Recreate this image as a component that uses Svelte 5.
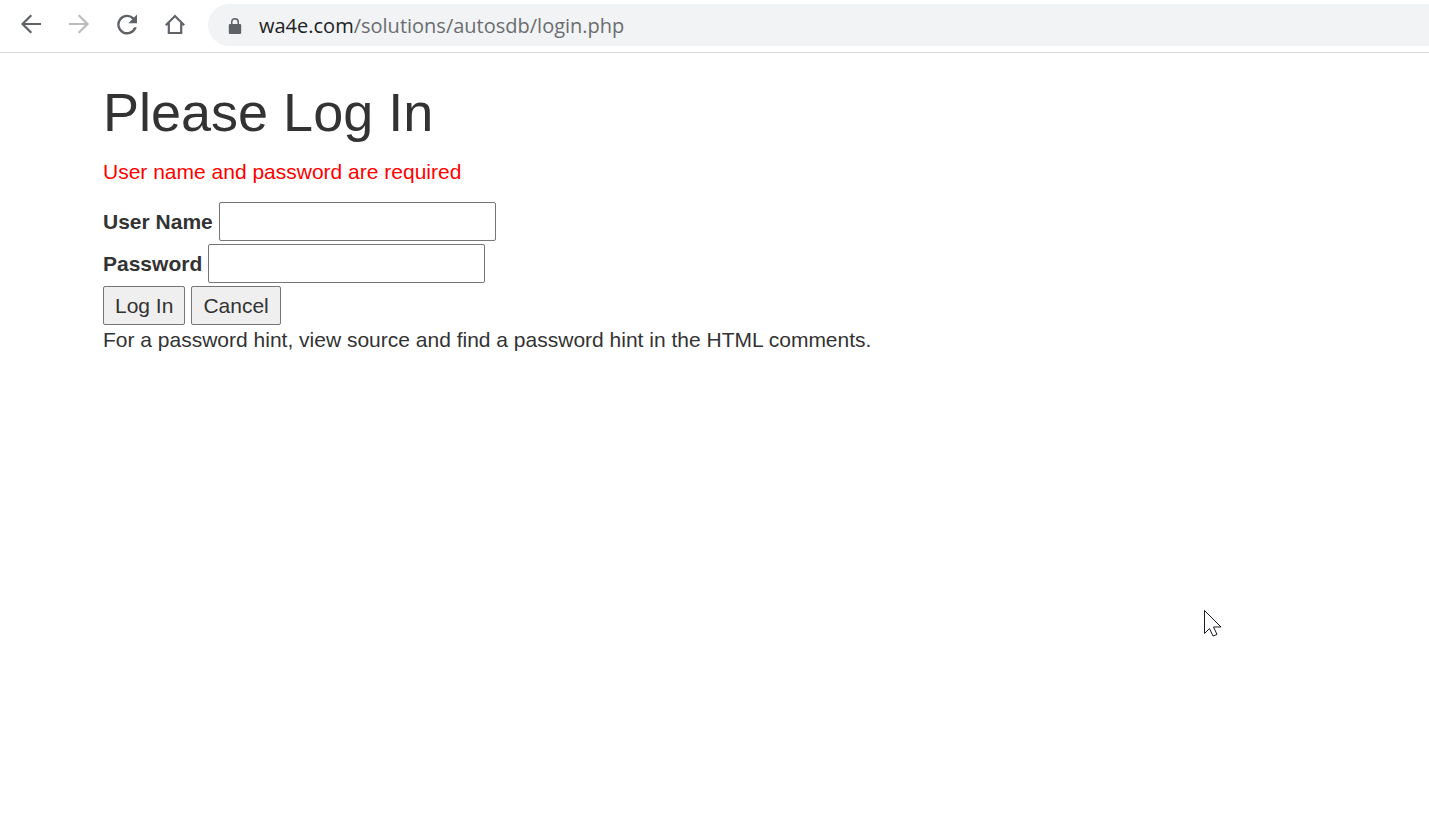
<script>
  let username = $state('');
  let password = $state('');
</script>

<div class="screen">
  <header class="toolbar">
    <nav class="controls" aria-label="Browser">
      <button type="button" aria-label="Back">
        <svg class="line" viewBox="0 0 30 30"><path d="M25 14H7M15.300 5.300L6.500 14l8.800 8.700" /></svg>
      </button>
      <button type="button" aria-label="Forward">
        <svg class="line dim" viewBox="0 0 30 30"><path d="M5 14h18M14.700 5.300L23.500 14l-8.800 8.700" /></svg>
      </button>
      <button type="button" aria-label="Reload">
        <svg viewBox="0 0 30 30"><path d="M22 7.500A9.900 9.900 0 1 0 24.700 17.200H22.100A7.500 7.500 0 1 1 20.300 9.200L16.300 13.200H25V4.500z" /></svg>
      </button>
      <button type="button" aria-label="Home">
        <svg class="line" viewBox="0 0 30 30"><path d="M5.800 15.200L15 6l9.200 9.200M8.800 13v10h12.400V13" /></svg>
      </button>
    </nav>
    <div class="address">
      <svg class="lock" viewBox="0 0 14 18" aria-hidden="true">
        <path d="M12 7h-1V5a4 4 0 0 0-8 0v2H2a1.200 1.200 0 0 0-1.200 1.200v7.600A1.200 1.200 0 0 0 2 17h10a1.200 1.200 0 0 0 1.200-1.200V8.200A1.200 1.200 0 0 0 12 7zM4.500 7V5a2.500 2.500 0 0 1 5 0v2z" />
      </svg>
      <span class="url"><span class="host">wa4e.com</span>/solutions/autosdb/login.php</span>
    </div>
  </header>

  <main>
    <h1>Please Log In</h1>
    <p class="error">User name and password are required</p>
    <form onsubmit={(event) => event.preventDefault()}>
      <div class="row">
        <label for="username">User Name</label>
        <input id="username" type="text" bind:value={username} />
      </div>
      <div class="row">
        <label for="password">Password</label>
        <input id="password" type="password" bind:value={password} />
      </div>
      <div class="row">
        <button type="submit">Log In</button>
        <button type="button">Cancel</button>
      </div>
    </form>
    <p>For a password hint, view source and find a password hint in the HTML comments.</p>
  </main>

  <svg class="pointer" viewBox="0 0 20 28" aria-hidden="true">
    <path d="M1.500 1.500v23l5-5 3.500 7.500 4-1.500-3.500-7.500H18z" />
  </svg>
</div>

<style>
  :global(body) {
    margin: 0;
    background: #fff;
  }

  .screen {
    position: relative;
    min-height: 100vh;
    color: #333;
    font-family: "Liberation Sans", Arial, sans-serif;
    font-size: 21px;
    line-height: 30px;
  }

  .toolbar {
    display: flex;
    align-items: center;
    gap: 18px;
    padding: 4px 0 6px 16px;
    border-bottom: 1px solid #dadce0;
  }

  .controls {
    display: flex;
    gap: 18px;
  }

  .controls button {
    display: flex;
    padding: 0;
    border: 0;
    background: none;
  }

  .controls svg {
    width: 30px;
    height: 30px;
    fill: #5f6368;
  }

  .controls .line {
    fill: none;
    stroke: #5f6368;
    stroke-width: 2.2;
  }

  .controls .dim {
    stroke: #babcbe;
  }

  .address {
    box-sizing: border-box;
    display: flex;
    flex: 1;
    align-items: center;
    gap: 17px;
    height: 42px;
    padding: 2px 0 0 20px;
    border-radius: 21px 0 0 21px;
    background: #f1f3f4;
  }

  .lock {
    width: 14px;
    height: 18px;
    fill: #5f6368;
  }

  .url {
    color: #6b6d70;
    font-family: "Segoe UI", "Open Sans", sans-serif;
    font-size: 20px;
    white-space: nowrap;
  }

  .host {
    color: #202124;
  }

  main {
    padding: 30px 103px;
  }

  h1 {
    margin: 0 0 15px;
    font-size: 54px;
    font-weight: 400;
    line-height: 59px;
  }

  p {
    margin: 0;
  }

  .error {
    margin-bottom: 15px;
    color: #f00;
  }

  form {
    display: flex;
    flex-direction: column;
    gap: 3px;
  }

  .row {
    display: flex;
    align-items: center;
    gap: 6px;
  }

  label {
    font-weight: 700;
  }

  input,
  .row button {
    box-sizing: border-box;
    height: 39px;
    border: 1px solid #767676;
    border-radius: 2px;
    color: inherit;
    font: inherit;
  }

  input {
    width: 277px;
    padding: 2px 4px;
    background: #fff;
  }

  .row button {
    padding: 0 11px;
    background: #efefef;
  }

  .pointer {
    position: absolute;
    top: 609px;
    left: 1203px;
    width: 20px;
    height: 28px;
    fill: #fff;
    stroke: #1b1b26;
  }
</style>
